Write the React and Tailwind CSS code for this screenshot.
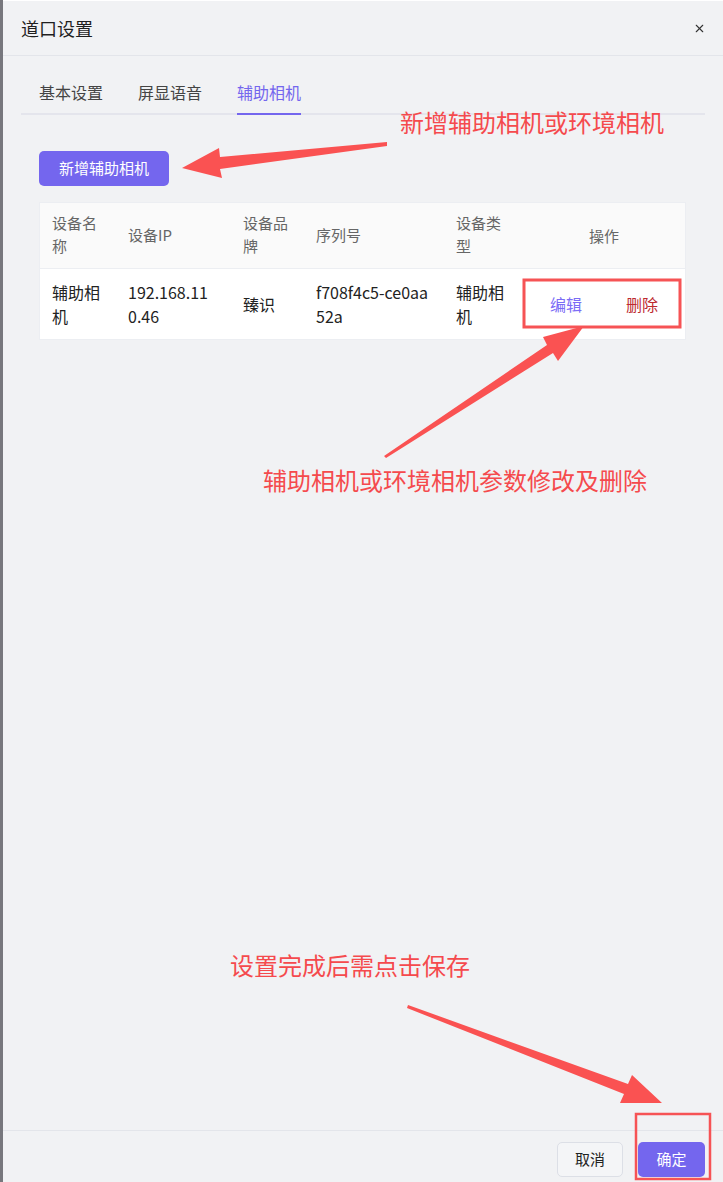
import React from 'react';
import { X } from 'lucide-react';

const columns = [
  { key: 'name', title: '设备名称', width: 'w-[76px]' },
  { key: 'ip', title: '设备IP', width: 'w-[115px]' },
  { key: 'brand', title: '设备品牌', width: 'w-[73px]' },
  { key: 'serial', title: '序列号', width: 'w-[140px]' },
  { key: 'type', title: '设备类型', width: 'w-[79px]' },
];

const rows = [
  { name: '辅助相机', ip: '192.168.110.46', brand: '臻识', serial: 'f708f4c5-ce0aa52a', type: '辅助相机' },
];

const tabs = ['基本设置', '屏显语音', '辅助相机'];

const Annotations = () => (
  <>
    <svg className="absolute inset-0 pointer-events-none" width="723" height="1182" viewBox="0 0 723 1182">
      {/* arrow to the add button */}
      <polygon points="387,142 220,157 219,148 182,168 222,178 220,169 387,146" fill="#fa5252" />
      {/* arrow to edit / delete */}
      <polygon points="384,456 547,345 543,337 584,326 558,361 553,353 386,458" fill="#fa5252" />
      {/* arrow to confirm */}
      <polygon points="408,1005 628,1084 632,1075 662,1103 620,1103 624,1094 407,1008" fill="#fa5252" />
      <rect x="524" y="280" width="156" height="47" fill="none" stroke="#f65355" strokeWidth="3" />
      <rect x="636" y="1114" width="74" height="65" fill="none" stroke="#f65355" strokeWidth="2.5" />
    </svg>
    <div className="absolute left-[400px] top-[106px] text-[24px] leading-8 text-[#f54a4d]">新增辅助相机或环境相机</div>
    <div className="absolute left-[263px] top-[464px] text-[24px] leading-8 text-[#f54a4d]">辅助相机或环境相机参数修改及删除</div>
    <div className="absolute left-[230px] top-[949px] text-[24px] leading-8 text-[#f54a4d]">设置完成后需点击保存</div>
  </>
);

export default function App() {
  return (
    <div
      className="relative flex w-[723px] h-[1182px] overflow-hidden bg-[#f1f2f4]"
      style={{ fontFamily: '"Noto Sans CJK SC", "Noto Sans", sans-serif' }}
    >
      {/* page behind the drawer */}
      <div className="w-[3px] shrink-0 bg-[#77777d]" />

      <div className="flex-1 flex flex-col border-t border-white">
        {/* Header */}
        <div className="h-[55px] shrink-0 flex items-center justify-between pl-[18px] pr-[17px] border-b border-[#e3e5ea]">
          <span className="text-[18px] text-[#1f1f1f]">道口设置</span>
          <X className="w-[13px] h-[13px] text-[#333]" strokeWidth={2} />
        </div>

        {/* Tabs */}
        <div className="mx-[18px] mt-[13px] flex gap-[35px] pl-[18px] border-b-2 border-[#e4e5ec]">
          {tabs.map((tab, i) => (
            <div
              key={tab}
              className={`text-[16px] leading-6 pt-[11px] pb-[9px] -mb-[2px] border-b-2 ${
                i === 2 ? 'text-[#7466ee] border-[#7466ee]' : 'text-[#444] border-transparent'
              }`}
            >
              {tab}
            </div>
          ))}
        </div>

        {/* Content */}
        <div className="flex-1 px-9 pt-[36px]">
          <button className="h-[35px] w-[130px] rounded-[5px] bg-[#7466ee] text-white text-[15px]">
            新增辅助相机
          </button>

          <div className="mt-[16px] w-[647px] bg-white border border-[#eceef2]">
            <div className="flex bg-[#fafafa] text-[15px] leading-[23px] text-[#666]">
              {columns.map((c) => (
                <div key={c.key} className={`${c.width} shrink-0 px-3 pt-[8px] pb-[11px] flex items-center break-all`}>
                  {c.title}
                </div>
              ))}
              <div className="flex-1 px-3 flex items-center justify-center">操作</div>
            </div>
            {rows.map((r) => (
              <div key={r.serial} className="flex border-t border-[#eceef2] text-[16px] leading-6 text-[#222]">
                {columns.map((c) => (
                  <div key={c.key} className={`${c.width} shrink-0 px-3 pt-[11px] pb-[11px] flex items-center break-all`}>
                    {r[c.key]}
                  </div>
                ))}
                <div className="flex-1 flex items-center justify-center gap-[44px]">
                  <span className="text-[#7b6cf6]">编辑</span>
                  <span className="text-[#bd2a30]">删除</span>
                </div>
              </div>
            ))}
          </div>
        </div>

        {/* Footer */}
        <div className="h-[52px] shrink-0 flex items-start justify-end gap-[15px] pt-[11px] pr-[18px] border-t border-[#e3e5ea]">
          <button className="h-[35px] w-[66px] rounded-[5px] border border-[#dcdfe6] bg-[#f4f5f7] text-[15px] text-[#222]">
            取消
          </button>
          <button className="h-[35px] w-[67px] rounded-[5px] bg-[#7466ee] text-[15px] text-white">
            确定
          </button>
        </div>
      </div>

      <Annotations />
    </div>
  );
}
